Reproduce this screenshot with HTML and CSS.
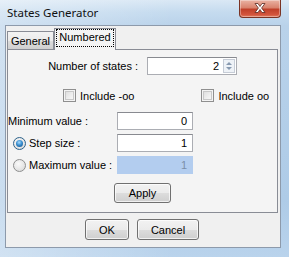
FILE: index.html
```html
<!DOCTYPE html>
<html>
<head>
<meta charset="utf-8">
<link rel="stylesheet" href="styles.css">
</head>
<body>
<div class="window">
  <div class="titlebar">
    <span class="title">States Generator</span>
    <div class="close">
      <svg width="42" height="18" viewBox="0 0 42 18">
        <path d="M16 4.5 L19 4.5 L21 7.5 L23 4.5 L26 4.5 L22.6 9 L26 13.5 L23 13.5 L21 10.5 L19 13.5 L16 13.5 L19.4 9 Z" fill="#ffffff" stroke="#5a2a22" stroke-width="0.8" stroke-linejoin="round"/>
      </svg>
    </div>
  </div>
  <div class="client">
    <div class="tabs">
      <div class="tab">General</div>
      <div class="tab active"><span class="focus">Numbered</span></div>
    </div>
    <div class="panel">
      <div class="row-states">
        <span class="lbl-states">Number of states :</span>
        <div class="spin">
          <span class="val">2</span>
          <span class="arrows">
            <svg width="12" height="14" viewBox="0 0 12 14">
              <rect x="0.5" y="0.5" width="11" height="13" fill="#eef2f7" stroke="#c6ccd6"/>
              <path d="M3 6 L6 3 L9 6 Z" fill="#8799b0"/>
              <path d="M3 8 L6 11 L9 8 Z" fill="#8799b0"/>
            </svg>
          </span>
        </div>
      </div>
      <div class="row-checks">
        <span class="check first"><span class="box"></span>Include -oo</span>
        <span class="check second"><span class="box"></span>Include oo</span>
      </div>
      <div class="field first-field">
        <span class="lbl">Minimum value :</span>
        <span class="input">0</span>
      </div>
      <div class="field">
        <span class="lbl radio-lbl"><span class="radio on"><span class="dot"></span></span>Step size :</span>
        <span class="input">1</span>
      </div>
      <div class="field">
        <span class="lbl radio-lbl"><span class="radio"></span>Maximum value :</span>
        <span class="input disabled">1</span>
      </div>
      <div class="apply-row">
        <span class="btn apply">Apply</span>
      </div>
    </div>
    <div class="buttons">
      <span class="btn ok">OK</span>
      <span class="btn cancel">Cancel</span>
    </div>
  </div>
</div>
</body>
</html>
```
FILE: styles.css
```css
html, body {
  margin: 0;
  padding: 0;
}
body {
  width: 289px;
  height: 257px;
  overflow: hidden;
  font-family: "Liberation Sans", Arial, sans-serif;
  font-size: 11px;
  color: #000;
}
.window {
  width: 289px;
  height: 257px;
  box-sizing: border-box;
  background:
    linear-gradient(to right, rgba(255,255,255,0.35) 0, rgba(255,255,255,0) 60%),
    linear-gradient(to bottom, #dae8f5 0, #c5dbef 12px, #b9d2ea 26px, #aecbe7 200px, #b9d3ec 257px);
  display: flex;
  flex-direction: column;
}
.titlebar {
  height: 25px;
  display: flex;
  justify-content: space-between;
  align-items: flex-start;
}
.title {
  font-family: "Noto Sans", "Open Sans", sans-serif;
  font-size: 11.5px;
  margin-left: 7px;
  margin-top: 5px;
  color: #111;
}
.close {
  width: 42px;
  height: 18px;
  margin-right: 8px;
  box-sizing: border-box;
  border: 1px solid #7a3324;
  border-top: none;
  border-radius: 0 0 4px 4px;
  background: linear-gradient(to bottom, #eab3a4 0, #d9836e 45%, #c0402a 55%, #d2543c 85%, #e07a5e 100%);
  box-shadow: inset 0 0 0 1px rgba(255,255,255,0.35);
}
.close svg {
  display: block;
  margin: -1px 0 0 -1px;
}
.client {
  margin-left: 5px;
  width: 276px;
  height: 223px;
  box-sizing: border-box;
  border: 1px solid #8d9aab;
  background: #f0f0f0;
  display: flex;
  flex-direction: column;
}
.tabs {
  margin-top: 2px;
  margin-left: 1px;
  height: 21px;
  display: flex;
  align-items: flex-end;
}
.tab {
  height: 18px;
  width: 47px;
  box-sizing: border-box;
  border: 1px solid #898c95;
  border-bottom: none;
  background: linear-gradient(to bottom, #f3f3f3 0, #ebebeb 50%, #dddddd 51%, #cfcfcf 100%);
  display: flex;
  align-items: center;
  justify-content: center;
  padding-top: 1px;
}
.tab.active {
  height: 22px;
  width: 62px;
  margin-left: 0;
  margin-bottom: -1px;
  background: #f4f4f4;
  position: relative;
  z-index: 1;
  border-left: 1px solid #898c95;
  padding-top: 0;
  align-items: flex-start;
}
.focus {
  margin-top: 1px;
  padding: 0 2px 1px 2px;
  outline: 1px dotted #000;
  line-height: 15px;
}
.panel {
  margin-left: 1px;
  width: 271px;
  height: 164px;
  box-sizing: border-box;
  border: 1px solid #898c95;
  background: #f4f4f4;
  display: flex;
  flex-direction: column;
}
.row-states {
  margin-top: 7px;
  display: flex;
  align-items: center;
}
.lbl-states {
  width: 130px;
  text-align: right;
}
.spin {
  margin-left: 9px;
  width: 90px;
  height: 18px;
  box-sizing: border-box;
  border: 1px solid #abadb3;
  border-top-color: #888a90;
  background: #fff;
  display: flex;
  align-items: center;
  justify-content: flex-end;
}
.val {
  margin-right: 4px;
}
.arrows svg {
  display: block;
  margin-right: 1px;
}
.row-checks {
  margin-top: 14px;
  height: 13px;
  display: flex;
  align-items: center;
}
.check {
  display: flex;
  align-items: center;
}
.check.first {
  margin-left: 55px;
}
.check.second {
  margin-left: 67px;
}
.box {
  width: 13px;
  height: 13px;
  box-sizing: border-box;
  border: 1px solid #8f8f8f;
  background: linear-gradient(135deg, #d8d8d8 0, #f0f0f0 60%, #fbfbfb 100%);
  box-shadow: inset 0 0 0 1px #f4f4f4, inset 0 0 0 2px #c8c8c8;
  margin-right: 4px;
}
.field {
  margin-top: 4px;
  display: flex;
  align-items: center;
}
.field.first-field {
  margin-top: 10px;
}
.lbl {
  width: 109px;
  display: flex;
  align-items: center;
}
.radio-lbl {
  padding-left: 5px;
  width: 104px;
}
.radio {
  width: 13px;
  height: 13px;
  box-sizing: border-box;
  border-radius: 50%;
  border: 1px solid #8e8f8f;
  background: radial-gradient(circle at 40% 35%, #fafafa 0, #e8e8e8 50%, #d4d4d4 100%);
  margin-right: 3px;
  display: flex;
  align-items: center;
  justify-content: center;
}
.radio.on {
  border-color: #2c628b;
}
.dot {
  width: 7px;
  height: 7px;
  border-radius: 50%;
  background: radial-gradient(circle at 45% 35%, #a8dcff 0, #3a8fd0 45%, #0b4a80 100%);
}
.input {
  width: 76px;
  height: 18px;
  box-sizing: border-box;
  border: 1px solid #abadb3;
  border-top-color: #888a90;
  background: #fff;
  display: flex;
  align-items: center;
  justify-content: flex-end;
  padding-right: 5px;
}
.input.disabled {
  background: #b3cdef;
  border-color: #b3cdef;
  color: #7b8fa8;
}
.apply-row {
  margin-top: 9px;
  display: flex;
}
.btn {
  height: 20px;
  box-sizing: border-box;
  border: 1px solid #707070;
  border-radius: 3px;
  background: linear-gradient(to bottom, #f2f2f2 0, #ebebeb 50%, #dddddd 51%, #cfcfcf 100%);
  box-shadow: inset 0 0 0 1px rgba(255,255,255,0.7);
  display: flex;
  align-items: center;
  justify-content: center;
}
.apply {
  margin-left: 106px;
  width: 57px;
}
.buttons {
  margin-top: 6px;
  display: flex;
}
.ok {
  margin-left: 79px;
  width: 44px;
  height: 21px;
}
.cancel {
  margin-left: 8px;
  width: 62px;
  height: 21px;
}
```
